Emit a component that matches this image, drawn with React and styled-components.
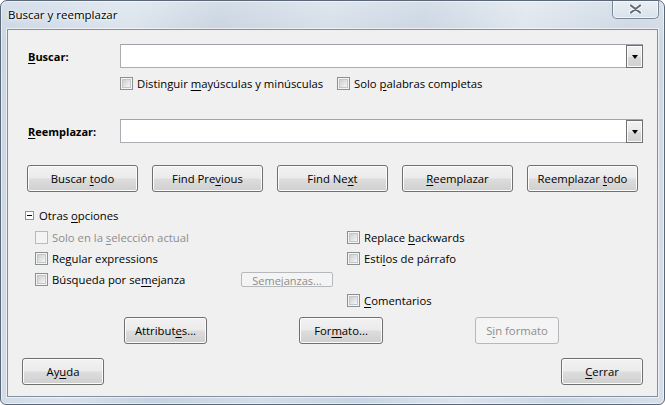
import React from "react";
import styled, { createGlobalStyle } from "styled-components";

const Global = createGlobalStyle`
  html, body { margin: 0; padding: 0; background: #ffffff; }
  body { font-family: "Open Sans", "Noto Sans", sans-serif; }
`;

const FONT = `"Open Sans", "Noto Sans", sans-serif`;

const Window = styled.div`
  box-sizing: border-box;
  width: 665px;
  height: 405px;
  display: flex;
  flex-direction: column;
  border: 1px solid #5b6877;
  border-radius: 7px 7px 6px 6px;
  background:
    linear-gradient(180deg, rgba(255,255,255,0.25) 0%, rgba(255,255,255,0) 40px),
    linear-gradient(100deg, #c9d5e3 0%, #d9e2ec 18%, #c6d2df 30%, #d3dde8 45%, #c8d4e1 58%, #dce4ed 72%, #cbd6e3 86%, #d6dfe9 100%);
  box-shadow: inset 0 0 0 1px rgba(255,255,255,0.55);
  overflow: hidden;
`;

const TitleBar = styled.div`
  height: 28px;
  display: flex;
  align-items: flex-start;
  justify-content: space-between;
  flex-shrink: 0;
`;

const Title = styled.div`
  font: 11.5px ${FONT};
  color: #000;
  padding: 6px 0 0 7px;
  text-shadow: 0 0 6px rgba(255,255,255,0.9), 0 0 3px rgba(255,255,255,0.9);
`;

const CloseBtn = styled.div`
  box-sizing: border-box;
  width: 47px;
  height: 19px;
  margin: -1px 5px 0 0;
  border: 1px solid #7a8796;
  border-top: none;
  border-radius: 0 0 5px 5px;
  background: linear-gradient(180deg, rgba(255,255,255,0.45), rgba(255,255,255,0.15));
  box-shadow: inset 0 0 0 1px rgba(255,255,255,0.6);
  display: flex;
  align-items: center;
  justify-content: center;
`;

const Client = styled.div`
  flex: 1;
  margin: 0 6px 7px 6px;
  border: 1px solid #828f9d;
  box-shadow: 0 0 0 1px rgba(255,255,255,0.6);
  background: #f0f0f0;
  display: flex;
  flex-direction: column;
  font: 11.3px ${FONT};
  color: #000;
`;

const Row = styled.div`
  display: flex;
  align-items: center;
  margin-top: ${p => p.$top || 0}px;
  margin-left: ${p => p.$left || 0}px;
  margin-right: ${p => p.$right || 0}px;
  height: ${p => p.$h || 16}px;
  gap: ${p => p.$gap || 0}px;
  justify-content: ${p => p.$justify || "flex-start"};
`;

const FieldLabel = styled.label`
  width: 92px;
  flex-shrink: 0;
  font-weight: 700;
  font-size: 11px;
`;

const Combo = styled.div`
  box-sizing: border-box;
  flex: 1;
  height: 24px;
  display: flex;
  border: 1px solid #abadb3;
  border-top-color: #a0a3a9;
  background: #fff;
`;

const ComboInput = styled.div`
  flex: 1;
`;

const DropBtn = styled.div`
  box-sizing: border-box;
  width: 17px;
  margin: 0 -1px -1px 0;
  border: 1px solid #707070;
  background: linear-gradient(180deg, #f3f3f3 0%, #e8e8e8 50%, #d9d9d9 51%, #d0d0d0 100%);
  box-shadow: inset 0 0 0 1px #fbfbfb;
  display: flex;
  align-items: center;
  justify-content: center;
  &::after {
    content: "";
    border-left: 3.5px solid transparent;
    border-right: 3.5px solid transparent;
    border-top: 4px solid #000;
    margin-top: 1px;
  }
`;

const Check = styled.label`
  display: flex;
  align-items: center;
  gap: 4px;
  width: ${p => (p.$w ? `${p.$w}px` : "auto")};
  color: ${p => (p.$disabled ? "#8d8d8d" : "#000")};
  white-space: nowrap;
`;

const Box = styled.span`
  box-sizing: border-box;
  position: relative;
  width: 13px;
  height: 13px;
  flex-shrink: 0;
  border: 1px solid ${p => (p.$disabled ? "#b9b9b9" : "#8e8f8f")};
  background: #f4f4f4;
  &::after {
    content: "";
    position: absolute;
    inset: 1px;
    background: ${p =>
      p.$disabled
        ? "#f4f4f4"
        : "linear-gradient(135deg, #cbcfd4 0%, #dfe1e3 50%, #f6f6f6 100%)"};
    border: 1px solid ${p => (p.$disabled ? "#f4f4f4" : "#c3c6ca")};
    box-sizing: border-box;
  }
`;

const U = styled.u`
  text-decoration: underline;
  text-underline-offset: 2px;
`;

const Button = styled.button`
  box-sizing: border-box;
  width: ${p => p.$w || 111}px;
  height: 27px;
  padding: 0;
  border: 1px solid ${p => (p.disabled ? "#b5b9bc" : "#707070")};
  border-radius: 3px;
  background: ${p =>
    p.disabled
      ? "#f4f4f4"
      : "linear-gradient(180deg, #f2f2f2 0%, #ebebeb 48%, #dddddd 52%, #cfcfcf 100%)"};
  box-shadow: inset 0 0 0 1px ${p => (p.disabled ? "#f4f4f4" : "#fcfcfc")};
  font: 11.3px ${FONT};
  color: ${p => (p.disabled ? "#8d8d8d" : "#000")};
  flex-shrink: 0;
`;

const SmallButton = styled.button`
  box-sizing: border-box;
  width: 92px;
  height: 15px;
  padding: 0;
  border: 1px solid #b5b9bc;
  border-radius: 2px;
  background: #f4f4f4;
  font: 11px ${FONT};
  line-height: 16px;
  color: #8d8d8d;
  overflow: hidden;
  align-self: center;
  display: flex;
  justify-content: center;
  align-items: flex-start;
`;

const Expander = styled.span`
  box-sizing: border-box;
  position: relative;
  width: 9px;
  height: 9px;
  border: 1px solid #919191;
  background: #fff;
  margin-right: 5px;
  &::after {
    content: "";
    position: absolute;
    left: 1px;
    right: 1px;
    top: 3px;
    height: 1px;
    background: #000;
  }
`;

const Options = styled.div`
  display: grid;
  grid-template-columns: 312px 1fr;
  grid-auto-rows: 21px;
  margin: 4px 0 0 27px;
`;

const Cell = styled.div`
  display: flex;
  align-items: center;
  justify-content: space-between;
  padding-right: 14px;
`;

function CheckItem({ children, disabled, w }) {
  return (
    <Check $disabled={disabled} $w={w}>
      <Box $disabled={disabled} />
      <span>{children}</span>
    </Check>
  );
}

function CloseIcon() {
  return (
    <svg width="13" height="10" viewBox="0 0 13 10">
      <path d="M2 1.5 L11 8.5 M11 1.5 L2 8.5" stroke="#f5f7fa" strokeWidth="4.4" strokeLinecap="round" />
      <path d="M2 1.5 L11 8.5 M11 1.5 L2 8.5" stroke="#646c77" strokeWidth="2.2" strokeLinecap="round" />
    </svg>
  );
}

export default function App() {
  return (
    <>
      <Global />
      <Window>
        <TitleBar>
          <Title>Buscar y reemplazar</Title>
          <CloseBtn>
            <CloseIcon />
          </CloseBtn>
        </TitleBar>
        <Client>
          <Row $top={14} $left={20} $right={14} $h={24}>
            <FieldLabel><U>B</U>uscar:</FieldLabel>
            <Combo>
              <ComboInput />
              <DropBtn />
            </Combo>
          </Row>
          <Row $top={7} $left={112}>
            <CheckItem w={217}>Distinguir <U>m</U>ayúsculas y minúsculas</CheckItem>
            <CheckItem>Solo <U>p</U>alabras completas</CheckItem>
          </Row>
          <Row $top={28} $left={20} $right={14} $h={24}>
            <FieldLabel><U>R</U>eemplazar:</FieldLabel>
            <Combo>
              <ComboInput />
              <DropBtn />
            </Combo>
          </Row>
          <Row $top={22} $left={19} $h={27} $gap={14}>
            <Button>Buscar <U>t</U>odo</Button>
            <Button>Find Pre<U>v</U>ious</Button>
            <Button>Find Ne<U>x</U>t</Button>
            <Button><U>R</U>eemplazar</Button>
            <Button>Reemplazar <U>t</U>odo</Button>
          </Row>
          <Row $top={15} $left={17}>
            <Expander />
            <span>Otras <U>o</U>pciones</span>
          </Row>
          <Options>
            <Cell><CheckItem disabled>Solo en la <U>s</U>elección actual</CheckItem></Cell>
            <Cell><CheckItem>Replace <U>b</U>ackwards</CheckItem></Cell>
            <Cell><CheckItem>Re<U>g</U>ular expressions</CheckItem></Cell>
            <Cell><CheckItem>Esti<U>l</U>os de párrafo</CheckItem></Cell>
            <Cell>
              <CheckItem>Búsqueda por se<U>m</U>ejanza</CheckItem>
              <SmallButton disabled>Semejanzas...</SmallButton>
            </Cell>
            <Cell />
            <Cell />
            <Cell><CheckItem><U>C</U>omentarios</CheckItem></Cell>
          </Options>
          <Row $top={6} $left={116} $h={27} $gap={92}>
            <Button $w={83}>Attribut<U>e</U>s...</Button>
            <Button $w={84}>For<U>m</U>ato...</Button>
            <Button $w={84} disabled>S<U>i</U>n formato</Button>
          </Row>
          <Row $top={14} $left={14} $right={14} $h={27} $justify="space-between">
            <Button $w={82}>Ay<U>u</U>da</Button>
            <Button $w={82}><U>C</U>errar</Button>
          </Row>
        </Client>
      </Window>
    </>
  );
}
